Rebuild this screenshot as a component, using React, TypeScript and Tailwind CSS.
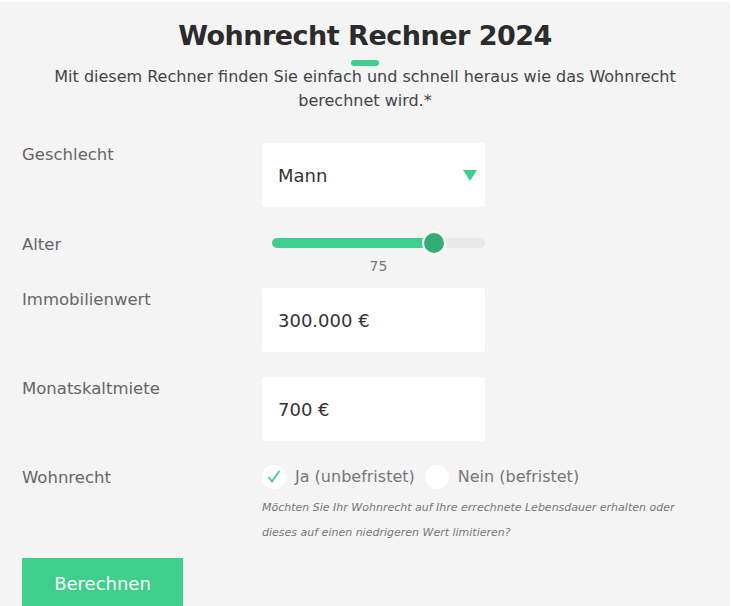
const font = "font-['DejaVu_Sans','Liberation_Sans',sans-serif]";

function Label({ children }: { children: React.ReactNode }) {
  return <div className="w-[240px] shrink-0 text-[16.5px] leading-6 text-[#666]">{children}</div>;
}

function Field({ value, select }: { value: string; select?: boolean }) {
  return (
    <div className="flex h-16 w-[223px] items-center justify-between rounded-[2px] bg-white pl-4 pr-2 text-[18px] text-[#333]">
      <span>{value}</span>
      {select && (
        <svg width="14" height="11" viewBox="0 0 14 11">
          <path d="M0 0h14L7 11z" fill="#3ecf8e" />
        </svg>
      )}
    </div>
  );
}

function Radio({ checked, label }: { checked?: boolean; label: string }) {
  return (
    <div className="flex items-center gap-[9px]">
      <div className="flex h-6 w-6 items-center justify-center rounded-full bg-white">
        {checked && (
          <svg width="14" height="14" viewBox="0 0 14 14">
            <path d="M2 7.5l3 4L12 1.5" fill="none" stroke="#3ecf8e" strokeWidth="1.8" strokeLinecap="round" />
          </svg>
        )}
      </div>
      <span className="text-[16px] text-[#777]">{label}</span>
    </div>
  );
}

export default function App() {
  return (
    <div className={`min-h-screen bg-white pt-[2px] ${font}`}>
      <div className="h-[604px] w-[730px] overflow-hidden bg-[#f4f4f4] px-[22px]">
        <h1 className="pt-[14px] text-center text-[27px] leading-[40px] font-bold tracking-[-0.5px] text-[#2b2b2b]">
          Wohnrecht Rechner 2024
        </h1>
        <div className="mx-auto mt-[4px] h-[6px] w-[28px] rounded-full bg-[#3ecf8e]" />
        <p className="mx-auto mt-[-1px] max-w-[650px] text-center text-[16px] leading-6 text-[#444]">
          Mit diesem Rechner finden Sie einfach und schnell heraus wie das Wohnrecht berechnet wird.*
        </p>

        <div className="mt-[30px] flex">
          <Label>Geschlecht</Label>
          <Field value="Mann" select />
        </div>

        <div className="mt-[25px] flex">
          <div className="pt-[1px]">
            <Label>Alter</Label>
          </div>
          <div className="w-[223px] pl-[10px]">
            <div className="relative mt-[6px] h-[10px] w-[213px] rounded-full bg-[#e9e9e9]">
              <div className="h-full w-[162px] rounded-full bg-[#3ecf8e]" />
              <div className="absolute top-[-7px] left-[150px] h-6 w-6 rounded-full border-2 border-white bg-[#33ad76]" />
            </div>
            <div className="mt-[10px] text-center text-[14px] leading-4 text-[#777]">75</div>
          </div>
        </div>

        <div className="mt-[14px] flex">
          <Label>Immobilienwert</Label>
          <Field value="300.000 €" />
        </div>

        <div className="mt-[25px] flex">
          <Label>Monatskaltmiete</Label>
          <Field value="700 €" />
        </div>

        <div className="mt-6 flex">
          <div className="pt-[1px]">
            <Label>Wohnrecht</Label>
          </div>
          <div>
            <div className="flex items-center gap-[10px]">
              <Radio checked label="Ja (unbefristet)" />
              <Radio label="Nein (befristet)" />
            </div>
            <p className="mt-[6px] max-w-[430px] text-[11px] leading-[25px] text-[#777] italic">
              Möchten Sie Ihr Wohnrecht auf Ihre errechnete Lebensdauer erhalten oder dieses auf einen niedrigeren Wert limitieren?
            </p>
          </div>
        </div>

        <button className="mt-[13px] h-[50px] w-[161px] bg-[#3ecf8a] text-[18px] text-white">Berechnen</button>
      </div>
    </div>
  );
}
